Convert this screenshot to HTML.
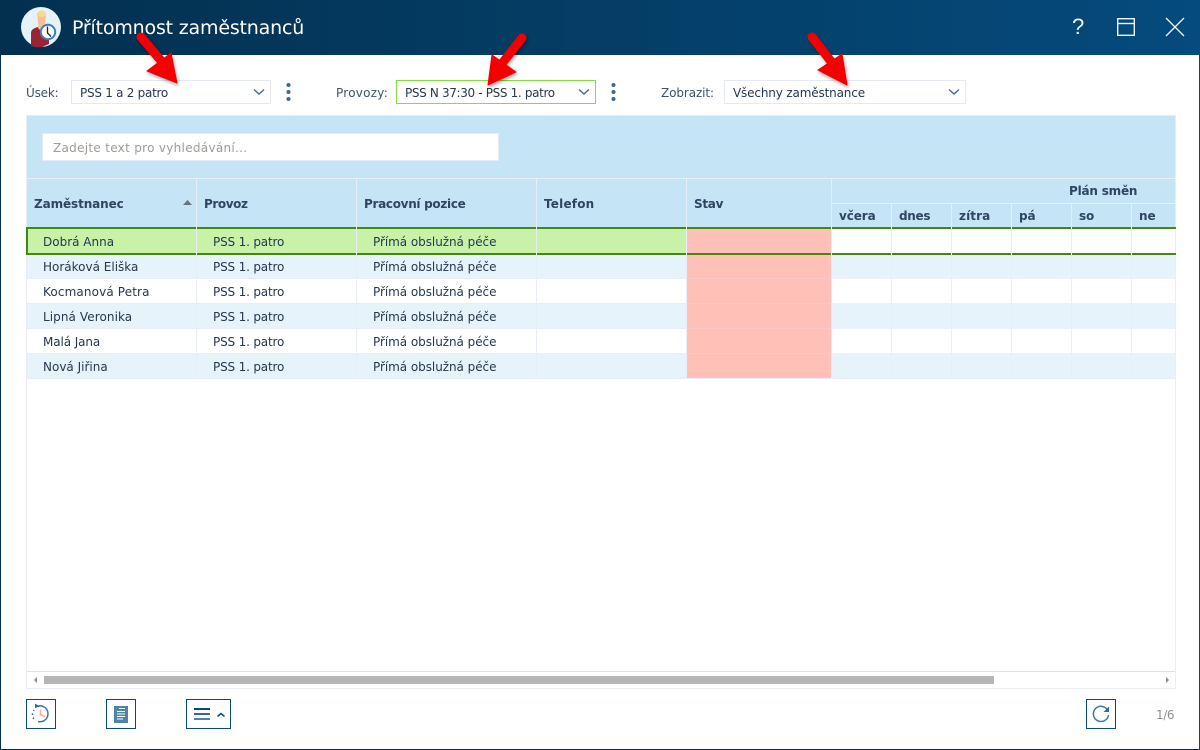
<!DOCTYPE html>
<html><head><meta charset="utf-8"><style>
html,body{margin:0;padding:0;width:1200px;height:750px;overflow:hidden;background:#fff}
body{font-family:"DejaVu Sans","Liberation Sans",sans-serif;font-size:12px;color:#26384e;position:relative}
.a{position:absolute}
.t{position:absolute;white-space:nowrap;line-height:16px;height:16px}
.b{font-weight:bold;color:#2f4563;font-size:12px;letter-spacing:-.1px}
.lab{color:#3d5268}
.p{letter-spacing:-.17px}
.sel{position:absolute;background:#fff;border:1px solid #e4e9f4;box-sizing:border-box;height:24px;top:80px}
.btn{position:absolute;top:699px;height:30px;box-sizing:border-box;border:1.3px solid #054b7d;background:#fff}
</style></head><body>
<div class="a" style="left:0;top:0;width:1200px;height:55px;background:linear-gradient(90deg,#03304f,#054b7d)"></div>
<div class="a" style="left:0;top:0;width:1200px;height:750px;box-sizing:border-box;border:1px solid #03304f;border-top:0;border-right-color:#054b7d"></div>

<svg class="a" style="left:20px;top:6px" width="42" height="42" viewBox="0 0 42 42">
<circle cx="21" cy="21" r="20" fill="#e6f2f9"/>
<path d="M11 40V27C11 23 15 22 18 21L24 21C27 22 29 24 29 28V38L22 41C18 41.500 14 41 11 40Z" fill="#9b2434"/>
<path d="M17 11C16 6 19 4.500 22 4.500C25 4.500 27 7 26 13L24 11H19Z" fill="#f5d98e"/>
<path d="M18 10C20 11 23 11 25 10C26 14 25 18 24 20L24 23L21 25L18 22L18.500 19C17.500 16 17.500 13 18 10Z" fill="#f9bf94"/>
<circle cx="28" cy="26" r="7.200" fill="#fff" stroke="#3d7fc0" stroke-width="2"/>
<path d="M27.500 20.500V27L31 30.500" fill="none" stroke="#222" stroke-width="1.300"/>
</svg>
<div class="t" style="left:72px;top:17px;font-size:19px;line-height:22px;height:22px;color:#fff;letter-spacing:-.19px">Přítomnost zaměstnanců</div>

<div class="t" style="left:1072px;top:13px;font-size:22px;line-height:28px;height:28px;color:#e8f2f8;font-family:'Liberation Sans',sans-serif">?</div>
<svg class="a" style="left:1115px;top:16px" width="24" height="22" fill="none" stroke="#eef5fa" stroke-width="1.4">
<rect x="2.700" y="2.700" width="16.600" height="16.600"/><path d="M3 7.500H19"/></svg>
<svg class="a" style="left:1163px;top:16px" width="24" height="24" fill="none" stroke="#eef5fa" stroke-width="1.300"><path d="M3 2L21 20M21 2L3 20"/></svg>

<div class="t lab" style="left:26px;top:85px;letter-spacing:-.2px">Úsek:</div>
<div class="sel" style="left:71px;width:200px"></div>
<div class="t" style="left:80px;top:85px;letter-spacing:-.27px">PSS 1 a 2 patro</div>
<div class="t lab" style="left:336px;top:85px;letter-spacing:.25px">Provozy:</div>
<div class="sel" style="left:396px;width:200px;border-color:#7fe23c"></div>
<div class="t" style="left:405px;top:85px;letter-spacing:-.35px">PSS N 37:30 - PSS 1. patro</div>
<div class="t lab" style="left:661px;top:85px;letter-spacing:-.1px">Zobrazit:</div>
<div class="sel" style="left:724px;width:242px"></div>
<div class="t" style="left:733px;top:85px;letter-spacing:-.15px">Všechny zaměstnance</div>
<svg class="a" style="left:0;top:0" width="1200" height="120" fill="none" stroke="#496b8c" stroke-width="1.400">
<path d="M254 89.500L259 94L264 89.500M579 89.500L584 94L589 89.500M949 89.500L954 94L959 89.500"/>
<g fill="#3a6a92" stroke="none"><circle cx="288.500" cy="85" r="2"/><circle cx="288.500" cy="92" r="2"/><circle cx="288.500" cy="99" r="2"/>
<circle cx="613.500" cy="85" r="2"/><circle cx="613.500" cy="92" r="2"/><circle cx="613.500" cy="99" r="2"/></g>
</svg>

<!-- panel -->
<div class="a" style="left:26px;top:115px;width:1150px;height:574px;box-sizing:border-box;border:1px solid #e9edf7;background:#fff"></div>
<div class="a" style="left:27px;top:116px;width:1148px;height:112px;background:#c5e4f6"></div>
<div class="a" style="left:42px;top:133px;width:457px;height:28px;box-sizing:border-box;background:#fff;border:1px solid #e4edf5"></div>
<div class="t" style="left:53px;top:140px;color:#a09a96;font-size:12px;letter-spacing:.3px">Zadejte text pro vyhledávání...</div>

<!-- rows bg -->
<div class="a" style="left:27px;top:254px;width:1148px;height:25px;background:#e6f3fb"></div>
<div class="a" style="left:27px;top:304px;width:1148px;height:25px;background:#e6f3fb"></div>
<div class="a" style="left:27px;top:354px;width:1148px;height:25px;background:#e6f3fb"></div>
<div class="a" style="left:27px;top:228px;width:805px;height:26px;background:#c8f2a8"></div>
<div class="a" style="left:687px;top:228px;width:144px;height:151px;background:#ffc0b8"></div>
<div class="a" style="left:687px;top:278px;width:144px;height:1px;background:#f3c9cc"></div>
<div class="a" style="left:687px;top:303px;width:144px;height:1px;background:#f3c9cc"></div>
<div class="a" style="left:687px;top:328px;width:144px;height:1px;background:#f3c9cc"></div>
<div class="a" style="left:687px;top:353px;width:144px;height:1px;background:#f3c9cc"></div>
<div class="a" style="left:27px;top:278px;width:660px;height:1px;background:#e9edf7"></div>
<div class="a" style="left:27px;top:303px;width:660px;height:1px;background:#e9edf7"></div>
<div class="a" style="left:27px;top:328px;width:660px;height:1px;background:#e9edf7"></div>
<div class="a" style="left:27px;top:353px;width:660px;height:1px;background:#e9edf7"></div>
<div class="a" style="left:27px;top:378px;width:1148px;height:1px;background:#e9edf7"></div>
<div class="a" style="left:832px;top:278px;width:343px;height:1px;background:#eef1f9"></div>
<div class="a" style="left:832px;top:303px;width:343px;height:1px;background:#eef1f9"></div>
<div class="a" style="left:832px;top:328px;width:343px;height:1px;background:#eef1f9"></div>
<div class="a" style="left:832px;top:353px;width:343px;height:1px;background:#eef1f9"></div>

<!-- grid lines -->
<div class="a" style="left:27px;top:178px;width:1148px;height:1px;background:#e8eff7"></div>
<div class="a" style="left:832px;top:203px;width:343px;height:1px;background:#e8eff7"></div>
<div class="a" style="left:196px;top:179px;width:1px;height:200px;background:#e8eef7"></div>
<div class="a" style="left:356px;top:179px;width:1px;height:200px;background:#e8eef7"></div>
<div class="a" style="left:536px;top:179px;width:1px;height:200px;background:#e8eef7"></div>
<div class="a" style="left:686px;top:179px;width:1px;height:200px;background:#e8eef7"></div>
<div class="a" style="left:831px;top:179px;width:1px;height:200px;background:#e8eef7"></div>
<div class="a" style="left:891px;top:203px;width:1px;height:176px;background:#e8eef7"></div>
<div class="a" style="left:951px;top:203px;width:1px;height:176px;background:#e8eef7"></div>
<div class="a" style="left:1011px;top:203px;width:1px;height:176px;background:#e8eef7"></div>
<div class="a" style="left:1071px;top:203px;width:1px;height:176px;background:#e8eef7"></div>
<div class="a" style="left:1131px;top:203px;width:1px;height:176px;background:#e8eef7"></div>

<!-- selected borders -->
<div class="a" style="left:26px;top:227px;width:1150px;height:2px;background:#43890f"></div>
<div class="a" style="left:26px;top:253px;width:1150px;height:2px;background:#43890f"></div>
<div class="a" style="left:26px;top:227px;width:2px;height:28px;background:#43890f"></div>
<div class="a" style="left:196px;top:227px;width:1px;height:28px;background:#e8eef7"></div>
<div class="a" style="left:356px;top:227px;width:1px;height:28px;background:#e8eef7"></div>
<div class="a" style="left:536px;top:227px;width:1px;height:28px;background:#e8eef7"></div>
<div class="a" style="left:686px;top:227px;width:1px;height:28px;background:#e8eef7"></div>
<div class="a" style="left:831px;top:227px;width:1px;height:28px;background:#e8eef7"></div>
<div class="a" style="left:891px;top:227px;width:1px;height:28px;background:#e8eef7"></div>
<div class="a" style="left:951px;top:227px;width:1px;height:28px;background:#e8eef7"></div>
<div class="a" style="left:1011px;top:227px;width:1px;height:28px;background:#e8eef7"></div>
<div class="a" style="left:1071px;top:227px;width:1px;height:28px;background:#e8eef7"></div>
<div class="a" style="left:1131px;top:227px;width:1px;height:28px;background:#e8eef7"></div>

<!-- headers -->
<div class="t b" style="left:34px;top:196px">Zaměstnanec</div>
<svg class="a" style="left:183px;top:200px" width="10" height="6"><path d="M0 5H9L4.500 0Z" fill="#6c7280"/></svg>
<div class="t b" style="left:204px;top:196px;letter-spacing:-.4px">Provoz</div>
<div class="t b" style="left:364px;top:196px;letter-spacing:-.3px">Pracovní pozice</div>
<div class="t b" style="left:544px;top:196px;letter-spacing:.2px">Telefon</div>
<div class="t b" style="left:694px;top:196px;letter-spacing:-.3px">Stav</div>
<div class="t b" style="left:1069px;top:183px;letter-spacing:-.2px">Plán směn</div>
<div class="t b" style="left:839px;top:208px">včera</div>
<div class="t b" style="left:899px;top:208px;letter-spacing:-.3px">dnes</div>
<div class="t b" style="left:959px;top:208px;letter-spacing:.1px">zítra</div>
<div class="t b" style="left:1019px;top:208px">pá</div>
<div class="t b" style="left:1079px;top:208px">so</div>
<div class="t b" style="left:1139px;top:208px">ne</div>

<!-- rows -->
<div class="t" style="left:43px;top:234px">Dobrá Anna</div><div class="t p" style="left:213px;top:234px">PSS 1. patro</div><div class="t" style="left:373px;top:234px;letter-spacing:-.05px">Přímá obslužná péče</div>
<div class="t" style="left:43px;top:259px">Horáková Eliška</div><div class="t p" style="left:213px;top:259px">PSS 1. patro</div><div class="t" style="left:373px;top:259px;letter-spacing:-.05px">Přímá obslužná péče</div>
<div class="t" style="left:43px;top:284px;letter-spacing:.13px">Kocmanová Petra</div><div class="t p" style="left:213px;top:284px">PSS 1. patro</div><div class="t" style="left:373px;top:284px;letter-spacing:-.05px">Přímá obslužná péče</div>
<div class="t" style="left:43px;top:309px;letter-spacing:.08px">Lipná Veronika</div><div class="t p" style="left:213px;top:309px">PSS 1. patro</div><div class="t" style="left:373px;top:309px;letter-spacing:-.05px">Přímá obslužná péče</div>
<div class="t" style="left:43px;top:334px;letter-spacing:-.1px">Malá Jana</div><div class="t p" style="left:213px;top:334px">PSS 1. patro</div><div class="t" style="left:373px;top:334px;letter-spacing:-.05px">Přímá obslužná péče</div>
<div class="t" style="left:43px;top:359px">Nová Jiřina</div><div class="t p" style="left:213px;top:359px">PSS 1. patro</div><div class="t" style="left:373px;top:359px;letter-spacing:-.05px">Přímá obslužná péče</div>

<!-- scrollbar -->
<div class="a" style="left:27px;top:671px;width:1148px;height:1px;background:#e2e2e6"></div>
<div class="a" style="left:44px;top:676px;width:950px;height:8px;background:#b6b6b6"></div>
<svg class="a" style="left:30px;top:674px" width="12" height="12"><path d="M7 3V9L4 6Z" fill="#8a8a8a"/></svg>
<svg class="a" style="left:1161px;top:674px" width="12" height="12"><path d="M5 3V9L8 6Z" fill="#8a8a8a"/></svg>

<!-- buttons -->
<div class="btn" style="left:26px;width:30px"></div>
<svg class="a" style="left:26px;top:699px" width="30" height="30" fill="none">
<path d="M12 7A8 8 0 1 1 12 22.500" stroke="#3f7aa3" stroke-width="1.500"/>
<path d="M9 9V4.500L14 7.500Z" fill="#2f6a96"/>
<path d="M8 11L7.500 12M6.500 14.500V16M7 18.500L7.800 19.800" stroke="#2f6a96" stroke-width="1.500"/>
<path d="M14.500 10.500V15.500L19 18" stroke="#f5a6ac" stroke-width="1.500"/>
</svg>
<div class="btn" style="left:106px;width:30px"></div>
<div class="a" style="left:114px;top:706px;width:14px;height:17px;background:#4f83a8"></div>
<svg class="a" style="left:114px;top:706px" width="14" height="17" stroke="#fff" stroke-width="1"><path d="M5 2.500H11M3 5.500H11M3 8H11M3 10.500H11M3 13H9"/></svg>
<div class="btn" style="left:186px;width:45px"></div>
<div class="a" style="left:194px;top:708px;width:16px;height:2px;background:#054b7d"></div>
<div class="a" style="left:194px;top:713px;width:16px;height:2px;background:#2f6a96"></div>
<div class="a" style="left:194px;top:718px;width:16px;height:2px;background:#4f83a8"></div>
<svg class="a" style="left:216px;top:711px" width="10" height="8" fill="none" stroke="#054b7d" stroke-width="1.500"><path d="M1.500 5.500L5 2.500L8.500 5.500"/></svg>
<div class="btn" style="left:1086px;width:30px"></div>
<svg class="a" style="left:1086px;top:699px" width="30" height="30" fill="none">
<path d="M21.500 11A7.600 7.600 0 1 0 22.500 16" stroke="#3f7aa3" stroke-width="1.500"/>
<path d="M23 7.500V13H17.500Z" fill="#2f6a96"/>
</svg>
<div class="t" style="left:1156px;top:707px;color:#8f8f8f;font-size:12px;letter-spacing:-.4px">1/6</div>

<!-- red arrows -->
<svg class="a" style="left:0;top:0;filter:drop-shadow(1px 2px 1.500px rgba(0,0,0,.35))" width="1200" height="120">
<g fill="#f40000" stroke="#f40000" stroke-linejoin="round">
<path d="M141 37L163 63" stroke-width="9" stroke-linecap="round"/>
<path d="M177 83L147 71L171 53Z" stroke-width="1"/>
<path d="M522 38L500 66" stroke-width="9" stroke-linecap="round"/>
<path d="M488 85L492 55L516 72Z" stroke-width="1"/>
<path d="M812 37L833 64" stroke-width="9" stroke-linecap="round"/>
<path d="M847 85L818 70L842 54Z" stroke-width="1"/>
</g></svg>
</body></html>
